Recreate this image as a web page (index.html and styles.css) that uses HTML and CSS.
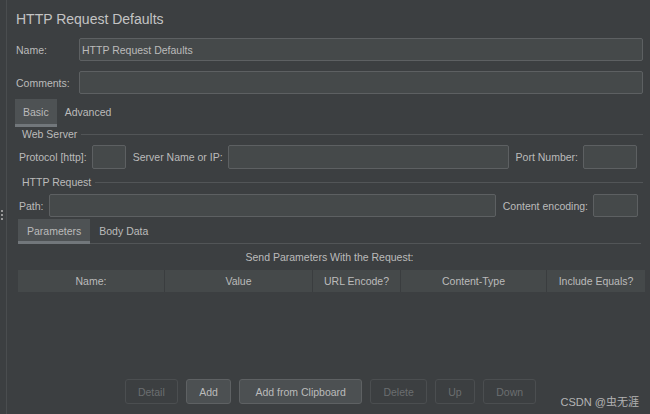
FILE: index.html
```html
<!DOCTYPE html>
<html lang="en">

<head>
    <meta charset="UTF-8">
    <meta name="viewport" content="width=device-width, initial-scale=1.0">
    <title>HTTP Request Defaults</title>
    <link rel="stylesheet" href="styles.css">
</head>

<body>
    <div class="app">
        <div class="splitter">
            <span class="grip"></span>
            <span class="grip"></span>
            <span class="grip"></span>
        </div>

        <div class="panel">
            <h1 class="panel-title">HTTP Request Defaults</h1>

            <div class="field-row">
                <label class="field-label">Name:</label>
                <div class="text-input">HTTP Request Defaults</div>
            </div>
            <div class="field-row comments-row">
                <label class="field-label">Comments:</label>
                <div class="text-input"></div>
            </div>

            <div class="tab-bar main-tabs">
                <div class="tab active">Basic</div>
                <div class="tab">Advanced</div>
            </div>

            <div class="tab-body">
                <div class="group-title">
                    <span>Web Server</span>
                    <span class="group-line"></span>
                </div>
                <div class="input-row server-row">
                    <label>Protocol [http]:</label>
                    <div class="text-input protocol-input"></div>
                    <label>Server Name or IP:</label>
                    <div class="text-input grow"></div>
                    <label>Port Number:</label>
                    <div class="text-input port-input"></div>
                </div>

                <div class="group-title request-title">
                    <span>HTTP Request</span>
                    <span class="group-line"></span>
                </div>
                <div class="input-row path-row">
                    <label>Path:</label>
                    <div class="text-input grow"></div>
                    <label>Content encoding:</label>
                    <div class="text-input encoding-input"></div>
                </div>

                <div class="tab-bar sub-tabs">
                    <div class="tab active">Parameters</div>
                    <div class="tab">Body Data</div>
                </div>

                <div class="params">
                    <div class="params-caption">Send Parameters With the Request:</div>
                    <div class="table-head">
                        <div class="th">Name:</div>
                        <div class="th">Value</div>
                        <div class="th">URL Encode?</div>
                        <div class="th">Content-Type</div>
                        <div class="th">Include Equals?</div>
                    </div>
                    <div class="table-body"></div>

                    <div class="button-row">
                        <button class="btn" disabled>Detail</button>
                        <button class="btn">Add</button>
                        <button class="btn btn-wide">Add from Clipboard</button>
                        <button class="btn" disabled>Delete</button>
                        <button class="btn" disabled>Up</button>
                        <button class="btn" disabled>Down</button>
                    </div>
                </div>
            </div>
        </div>
    </div>

    <div class="watermark">CSDN @虫无涯</div>
</body>

</html>
```

FILE: styles.css
```css
* {
    margin: 0;
    padding: 0;
    box-sizing: border-box;
}

:root {
    --bg: #3c3f41;
    --field-bg: #45494a;
    --field-border: #5d6062;
    --text: #bbbbbb;
    --text-disabled: #6b6e70;
    --tab-active: #4e5254;
    --tab-line: #72777b;
    --rule: #525557;
}

body {
    background: var(--bg);
    color: var(--text);
    font-family: "Liberation Sans", Arial, "Noto Sans CJK SC", sans-serif;
    font-size: 10.5px;
    width: 650px;
    height: 414px;
    overflow: hidden;
    position: relative;
}

.app {
    display: flex;
    height: 414px;
}

/* left splitter with grip dots */
.splitter {
    flex: 0 0 7px;
    border-right: 1px solid #4a4d4f;
    display: flex;
    flex-direction: column;
    align-items: flex-start;
    padding-top: 210px;
    padding-left: 1px;
    gap: 2px;
}

.grip {
    width: 2px;
    height: 2px;
    background: #9a9a9a;
}

.panel {
    flex: 1;
    min-width: 0;
    display: flex;
    flex-direction: column;
    padding: 0 7px 0 8px;
}

.panel-title {
    font-size: 14px;
    font-weight: normal;
    line-height: 20px;
    margin: 9px 0 0 1px;
    color: #c4c4c4;
}

.field-row {
    display: flex;
    align-items: center;
    height: 23px;
    margin-top: 9px;
}

.comments-row {
    margin-top: 10px;
}

.field-label {
    width: 64px;
    padding-left: 1px;
    flex-shrink: 0;
}

.text-input {
    flex: 1;
    height: 100%;
    background: var(--field-bg);
    border: 1px solid var(--field-border);
    border-radius: 2px;
    padding-left: 2px;
    display: flex;
    align-items: center;
    color: var(--text);
}

/* tabs */
.tab-bar {
    display: flex;
}

.main-tabs {
    margin-top: 5px;
    height: 28px;
}

.tab {
    padding: 0 8px;
    line-height: 26px;
    border-bottom: 3px solid transparent;
}

.tab.active {
    background: var(--tab-active);
    border-bottom-color: var(--tab-line);
}

.tab-body {
    flex: 1;
    min-width: 0;
    display: flex;
    flex-direction: column;
    padding-left: 3px;
}

.group-title {
    display: flex;
    align-items: center;
    height: 14px;
    padding-left: 4px;
}

.group-line {
    flex: 1;
    height: 1px;
    background: var(--rule);
    margin-left: 4px;
}

.request-title {
    margin-top: 6px;
}

.input-row {
    display: flex;
    align-items: center;
    padding-left: 1px;
}

.input-row label {
    margin-right: 5px;
    white-space: nowrap;
}

.input-row .text-input {
    margin-right: 7px;
}

.server-row {
    height: 24px;
    margin-top: 4px;
}

.server-row .text-input:last-child {
    margin-right: 6px;
}

.protocol-input {
    flex: 0 0 34px;
}

.port-input {
    flex: 0 0 54px;
}

.path-row {
    height: 23px;
    margin-top: 5px;
}

.path-row .text-input:last-child {
    margin-right: 5px;
}

.encoding-input {
    flex: 0 0 45px;
}

.grow {
    flex: 1;
}

.sub-tabs {
    margin-top: 2px;
    height: 26px;
    margin-right: 2px;
    box-shadow: inset 0 -2px 0 -1px var(--rule);
    border-bottom: 1px solid transparent;
}

.sub-tabs .tab {
    padding: 0 9px;
    line-height: 24px;
}

.params {
    flex: 1;
    display: flex;
    flex-direction: column;
    margin-right: 2px;
}

.params-caption {
    text-align: center;
    line-height: 20px;
    margin-top: 2px;
}

.table-head {
    display: grid;
    grid-template-columns: 146px 147px 87px 145px 98px;
    height: 22px;
    margin-top: 3px;
    background: #3a3d3f;
    gap: 1px;
}

.th {
    background: var(--field-bg);
    text-align: center;
    line-height: 22px;
}

.table-body {
    flex: 1;
}

.button-row {
    display: flex;
    justify-content: center;
    gap: 8.5px;
    margin-bottom: 10px;
    padding-left: 2px;
}

.btn {
    height: 25px;
    padding: 0 12px;
    font-family: inherit;
    font-size: 10.5px;
    color: var(--text);
    background: #4c5052;
    border: 1px solid #5e6163;
    border-radius: 3px;
}

.btn-wide {
    padding: 0 15px;
}

.btn:disabled {
    background: var(--bg);
    color: var(--text-disabled);
    border-color: #4b4e50;
}

.watermark {
    position: absolute;
    right: 11px;
    bottom: 5px;
    font-size: 11px;
    color: #b4b4b4;
}
```
